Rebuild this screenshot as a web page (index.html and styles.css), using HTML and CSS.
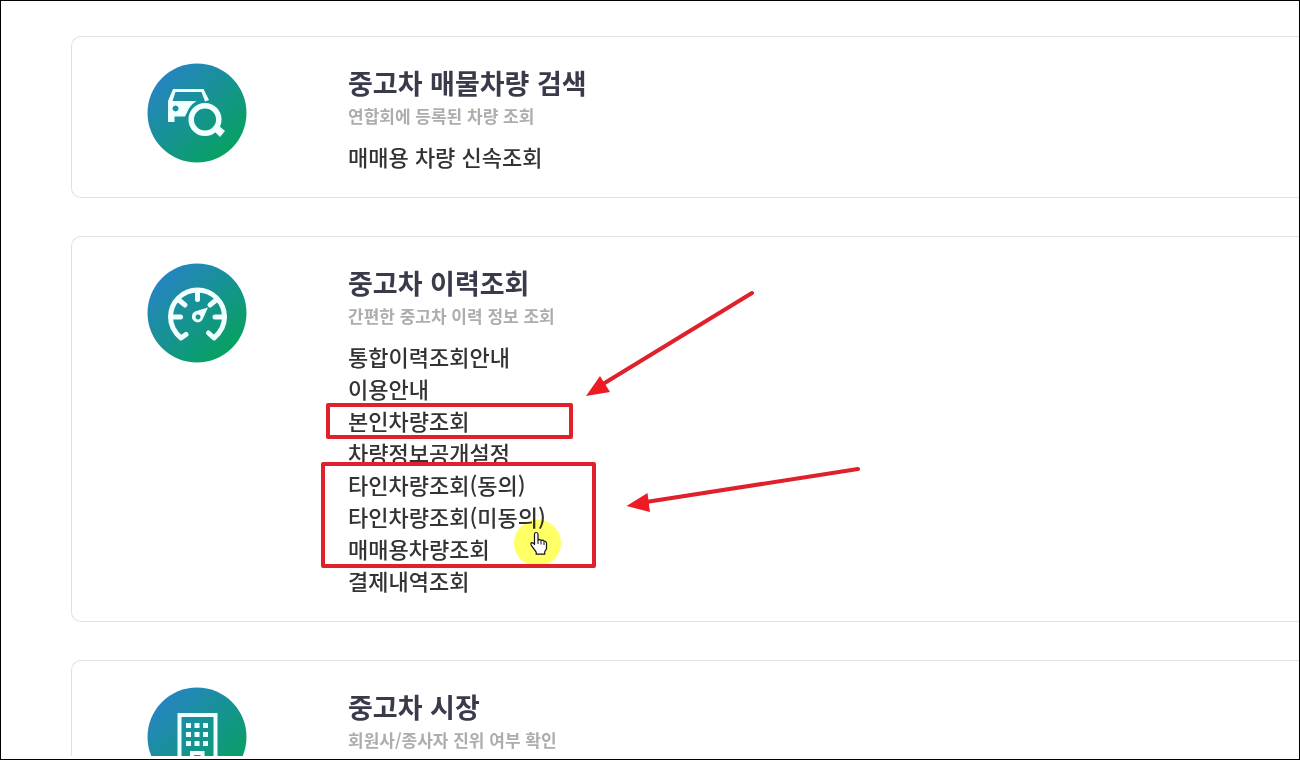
FILE: index.html
```html
<!DOCTYPE html>
<html lang="ko">
<head>
<meta charset="utf-8">
<title>중고차 서비스</title>
<link rel="stylesheet" href="styles.css">
</head>
<body>
<div class="frame">
  <main class="services">
    <section class="card">
      <svg class="card-icon" viewBox="0 0 100 100" aria-hidden="true">
        <defs>
          <linearGradient id="badge" x1="0.1" y1="0.15" x2="0.8" y2="0.9">
            <stop offset="0" stop-color="#2684c2"/>
            <stop offset="1" stop-color="#07a162"/>
          </linearGradient>
        </defs>
        <circle cx="50" cy="50" r="49.5" fill="url(#badge)"/>
        <g fill="#f0ffff">
          <path fill-rule="evenodd" d="M26 26H56.5L62 37L58 38.500L54.500 29H28.500L25.500 38H49.500Q42 43 40 49.500L38 53.500H27.500V59H21V38ZM28.500 42.500a3 3 0 1 0 .1 0Z"/>
          <path d="m66 67 5-5 7 6-5 6Z"/>
        </g>
        <circle cx="58" cy="56.500" r="13.800" fill="none" stroke="#f0ffff" stroke-width="5.500"/>
      </svg>
      <div class="card-body">
        <h2 class="card-title">중고차 매물차량 검색</h2>
        <p class="card-note">연합회에 등록된 차량 조회</p>
        <ul class="links">
          <li><a href="#">매매용 차량 신속조회</a></li>
        </ul>
      </div>
    </section>

    <section class="card">
      <svg class="card-icon" viewBox="0 0 100 100" aria-hidden="true">
        <circle cx="50" cy="50" r="49.500" fill="url(#badge)"/>
        <g fill="none" stroke="#f0ffff" stroke-width="5" stroke-linecap="round" stroke-linejoin="round">
          <path d="M39 71.500 34 75C27 69 23.500 62 23.500 54a27 27 0 0 1 54 0c0 8-3.500 15-10.500 21l-5.500-5"/>
          <path d="M50.500 28v8.500M24 54h9.500M77.500 54h-9.500M33 38l5 4M68 38l-5 4"/>
        </g>
        <path fill="#f0ffff" fill-rule="evenodd" d="M61 44.500 56 55.500a5.700 5.700 0 1 1-6.500-7.500ZM51 51.500a2.500 2.500 0 1 0 .1 0Z"/>
      </svg>
      <div class="card-body">
        <h2 class="card-title">중고차 이력조회</h2>
        <p class="card-note">간편한 중고차 이력 정보 조회</p>
        <ul class="links">
          <li><a href="#">통합이력조회안내</a></li>
          <li><a href="#">이용안내</a></li>
          <li><a href="#">본인차량조회</a></li>
          <li><a href="#">차량정보공개설정</a></li>
          <li><a href="#">타인차량조회(동의)</a></li>
          <li><a href="#">타인차량조회(미동의)</a></li>
          <li><a href="#">매매용차량조회</a></li>
          <li><a href="#">결제내역조회</a></li>
        </ul>
      </div>
    </section>

    <section class="card card-last">
      <svg class="card-icon" viewBox="0 0 100 100" aria-hidden="true">
        <circle cx="50" cy="50" r="49.500" fill="url(#badge)"/>
        <path d="M32.500 80V28H68.500V80M45 80V66H55.500V80" fill="none" stroke="#f0ffff" stroke-width="4"/>
        <path d="M39 36h5v5h-5zm8.500 0h5v5h-5zm8.500 0h5v5h-5zM39 45h5v5h-5zm8.500 0h5v5h-5zm8.500 0h5v5h-5zM39 54h5v5h-5zm8.500 0h5v5h-5zm8.500 0h5v5h-5z" fill="#f0ffff"/>
      </svg>
      <div class="card-body">
        <h2 class="card-title">중고차 시장</h2>
        <p class="card-note">회원사/종사자 진위 여부 확인</p>
      </div>
    </section>
  </main>

  <svg class="marks spot" viewBox="0 0 900 600" aria-hidden="true">
    <circle cx="536.500" cy="542" r="23.500" fill="#ffff66"/>
  </svg>
  <svg class="marks" viewBox="0 0 900 600" aria-hidden="true">
    <g fill="none" stroke="#e0202a" stroke-width="4" stroke-linejoin="round" stroke-linecap="round">
      <rect x="327" y="404" width="243" height="32"/>
      <rect x="322" y="463" width="271" height="102"/>
      <path d="M751 292 602 383M857 468 645 501"/>
    </g>
    <path d="M585 395 599 375 609 391ZM625.500 505 646.500 492 649 511Z" fill="#ed1c24"/>
    <path transform="translate(-1 -1)" d="M534.500 534.500q0-2 1.700-2t1.800 2v5.500q2-1 3 .500 2-.800 3 .700 2.200-.200 2.500 2v5.500l-1.800 3v2.500h-8.500v-2l-4.700-6.500q-1.500-2.500.5-3 1.500 0 2.500 1.800Z" fill="#fff" stroke="#111" stroke-width="1.200" stroke-linejoin="round"/>
    <path d="M537 539v4M540 540v3.500M543 541v3" fill="none" stroke="#111"/>
  </svg>
</div>
</body>
</html>
```
FILE: styles.css
```css
* {
  box-sizing: border-box;
}

body {
  margin: 0;
  background: #fff;
  font-family: "Noto Sans CJK KR", "Noto Sans", sans-serif;
}

.frame {
  position: relative;
  display: flex;
  height: 100vh;
  padding-bottom: 3px;
  border: 1px solid #000;
  overflow: hidden;
}

.services {
  flex: 1;
  display: flex;
  flex-direction: column;
  gap: 38px;
  padding: 35px 0 0 70px;
  overflow: hidden;
}

.card {
  flex: none;
  display: flex;
  gap: 101px;
  padding: 26px 24px 25px 75px;
  border: 1px solid #e1e1e1;
  border-right: 0;
  border-radius: 10px 0 0 10px;
}

.card-last {
  padding-bottom: 60px;
}

.card-icon {
  flex: none;
  width: 100px;
  height: 100px;
}

.card-title,
.card-note,
.links {
  margin: 0;
}

.card-title {
  color: #3a3b4a;
  font-size: 27px;
  font-weight: 700;
  line-height: 40px;
}

.card-note {
  color: #adadad;
  font-size: 17px;
  font-weight: 700;
  line-height: 26px;
}

.links {
  margin-top: 11px;
  padding: 0;
  list-style: none;
  font-size: 22px;
  font-weight: 500;
  line-height: 32px;
}

.links a {
  color: #333;
  text-decoration: none;
}

.marks {
  position: absolute;
  top: 0;
  left: 0;
  width: 900px;
  height: 600px;
  pointer-events: none;
}

.spot {
  mix-blend-mode: multiply;
}
```
